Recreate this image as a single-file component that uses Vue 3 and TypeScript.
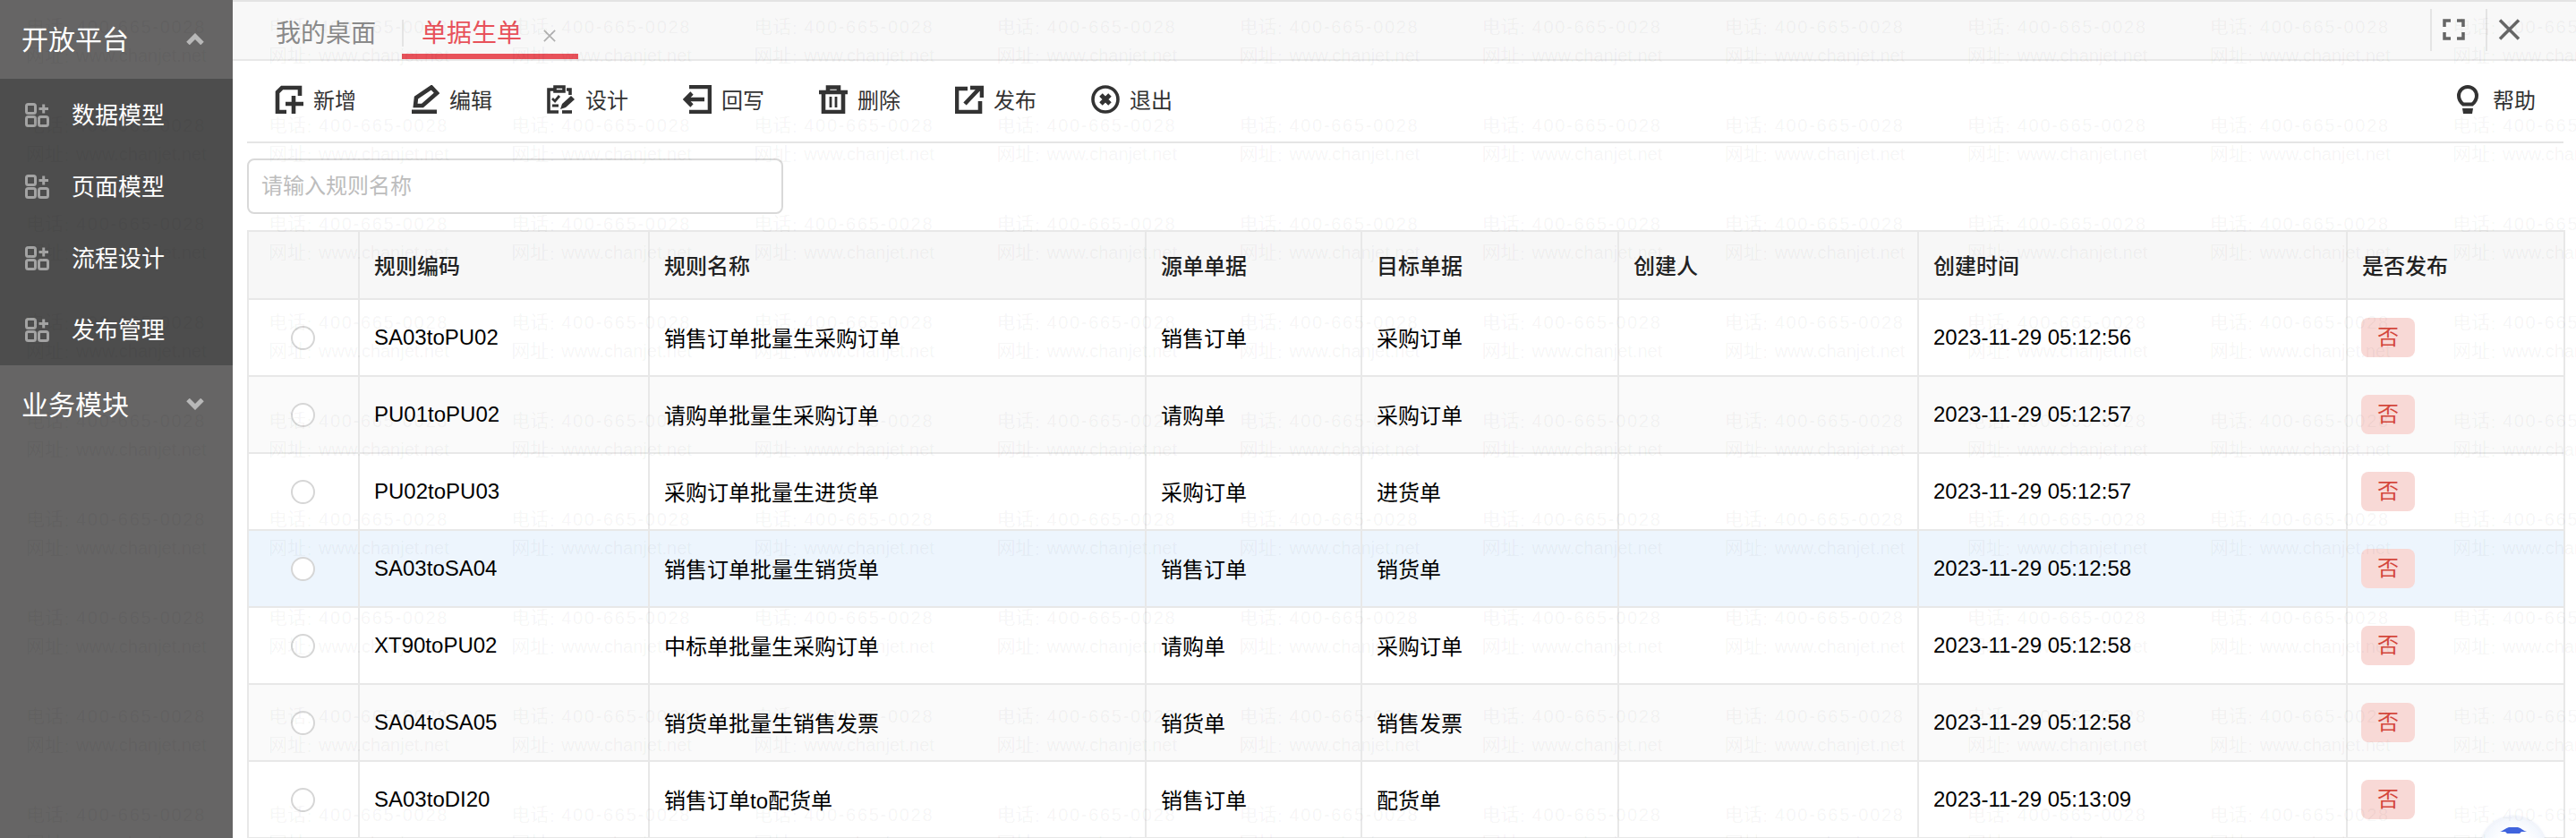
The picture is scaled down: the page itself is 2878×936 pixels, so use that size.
<script setup lang="ts">
interface Row { code: string; name: string; src: string; dst: string; time: string; selected?: boolean }
const rows: Row[] = [
  { code: 'SA03toPU02', name: '销售订单批量生采购订单', src: '销售订单', dst: '采购订单', time: '2023-11-29 05:12:56' },
  { code: 'PU01toPU02', name: '请购单批量生采购订单', src: '请购单', dst: '采购订单', time: '2023-11-29 05:12:57' },
  { code: 'PU02toPU03', name: '采购订单批量生进货单', src: '采购订单', dst: '进货单', time: '2023-11-29 05:12:57' },
  { code: 'SA03toSA04', name: '销售订单批量生销货单', src: '销售订单', dst: '销货单', time: '2023-11-29 05:12:58', selected: true },
  { code: 'XT90toPU02', name: '中标单批量生采购订单', src: '请购单', dst: '采购订单', time: '2023-11-29 05:12:58' },
  { code: 'SA04toSA05', name: '销货单批量生销售发票', src: '销货单', dst: '销售发票', time: '2023-11-29 05:12:58' },
  { code: 'SA03toDI20', name: '销售订单to配货单', src: '销售订单', dst: '配货单', time: '2023-11-29 05:13:09' },
]
const menu = ['数据模型', '页面模型', '流程设计', '发布管理']
const tools = ['新增', '编辑', '设计', '回写', '删除', '发布', '退出']
const heads = ['', '规则编码', '规则名称', '源单单据', '目标单据', '创建人', '创建时间', '是否发布']
const marks = Array.from({ length: 99 }, (_, i) => i)
</script>

<template>
  <div class="page">
    <aside class="side">
      <div class="group">
        <span>开放平台</span>
        <svg class="chev" viewBox="0 0 20 13"><path d="M2 11.5 L10 3.5 L18 11.5" /></svg>
      </div>
      <div class="menu">
        <div v-for="m in menu" :key="m" class="item">
          <svg class="mi" viewBox="0 0 27 27">
            <rect x="1.5" y="1.5" width="10" height="10" rx="2" />
            <rect x="1.5" y="15.5" width="10" height="10" rx="2" />
            <rect x="15.5" y="15.5" width="10" height="10" rx="2" />
            <path d="M15.5 6.5H26M20.7 1.5V11.5" />
          </svg>
          <span>{{ m }}</span>
        </div>
      </div>
      <div class="group">
        <span>业务模块</span>
        <svg class="chev" viewBox="0 0 20 13"><path d="M2 1.5 L10 9.5 L18 1.5" /></svg>
      </div>
    </aside>

    <main class="main">
      <div class="tabs">
        <div class="tab">我的桌面</div>
        <div class="tab active">
          <span>单据生单</span>
          <svg class="tabx" viewBox="0 0 16 16"><path d="M1 1L15 15M15 1L1 15" /></svg>
        </div>
        <div class="winbtns">
          <div class="winbtn">
            <svg viewBox="0 0 25 24"><path d="M9 2H2V9M16 2H23V9M2 15V22H9M23 15V22H16" /></svg>
          </div>
          <div class="winbtn">
            <svg viewBox="0 0 25 24"><path d="M2 1.5L23 22.5M23 1.5L2 22.5" /></svg>
          </div>
        </div>
      </div>

      <div class="toolbar">
        <div v-for="(t, i) in tools" :key="t" class="tool">
          <svg class="ti" viewBox="0 0 32 32">
            <template v-if="i === 0">
              <path d="M28 12V3H8L3 8V30H13" />
              <path d="M12 21H32M21 12V32" />
            </template>
            <template v-else-if="i === 1">
              <path d="M5 23L6 14L23 2.5L29 9L13 23Z" />
              <path d="M1 30H29" class="thick" />
            </template>
            <template v-else-if="i === 2">
              <path d="M9 5H2V30H13M22 5H26V11M9 2H19V7H9Z" class="mid" />
              <path d="M6 15L9 18L14 12M6 23H13" class="thin" />
              <path d="M15 27L17 21L27 12L31 16L21 25Z" class="fill" />
              <path d="M17 30H28" class="mid" />
            </template>
            <template v-else-if="i === 3">
              <path d="M7 2H30V30H7" />
              <path d="M24 16H3M10 9L3 16L10 23" />
            </template>
            <template v-else-if="i === 4">
              <path d="M0 8H32M10 8V2.5H22V8" />
              <path d="M5 8V30H27V8" />
              <path d="M13 13V25M19 13V25" class="thin" />
            </template>
            <template v-else-if="i === 5">
              <path d="M14 4H2V30H28V18" />
              <path d="M11 21L28 3M17 3H30V14" />
            </template>
            <template v-else>
              <circle cx="16" cy="16" r="14" class="mid" />
              <path d="M11 11L21 21M21 11L11 21" class="thick" />
            </template>
          </svg>
          <span>{{ t }}</span>
        </div>
        <div class="tool help">
          <svg class="hi" viewBox="0 0 24 32">
            <path d="M7 21.5C4 19 2 16 2 12A10 10 0 0 1 22 12C22 16 20 19 17 21.5Z" />
            <path d="M6 26H18L17 32H7Z" class="fill" />
          </svg>
          <span>帮助</span>
        </div>
      </div>

      <div class="search">
        <input class="input" placeholder="请输入规则名称" />
      </div>

      <table class="grid">
        <colgroup>
          <col class="c1" /><col class="c2" /><col class="c3" /><col class="c4" />
          <col class="c5" /><col class="c6" /><col class="c7" /><col class="c8" />
        </colgroup>
        <thead>
          <tr><th v-for="h in heads" :key="h">{{ h }}</th></tr>
        </thead>
        <tbody>
          <tr v-for="r in rows" :key="r.code" :class="{ sel: r.selected }">
            <td class="rc"><span class="radio" /></td>
            <td>{{ r.code }}</td>
            <td>{{ r.name }}</td>
            <td>{{ r.src }}</td>
            <td>{{ r.dst }}</td>
            <td></td>
            <td>{{ r.time }}</td>
            <td class="bc"><span class="badge">否</span></td>
          </tr>
        </tbody>
      </table>
    </main>

    <div class="robot">
      <svg viewBox="0 0 30 8" class="robot-svg"><path d="M0 6C4 5 6 2 10 1H20C24 2 26 5 30 6L24 6L22 8H8L6 6Z" /></svg>
    </div>

    <div class="wm">
      <div v-for="n in marks" :key="n" class="wm-tile">
        <div><span class="lab">电话</span><span class="col">：</span><span class="sp">400-665-0028</span></div>
        <div><span class="lab">网址</span><span class="col">：</span><span>www.chanjet.net</span></div>
      </div>
    </div>
  </div>
</template>

<style>
html, body { margin: 0; background: #fff; overflow: hidden; }
</style>

<style scoped>
.page {
  position: relative;
  width: 2878px;
  height: 936px;
  overflow: hidden;
  display: flex;
  font-family: "Liberation Sans", "Noto Sans CJK SC", sans-serif;
  font-size: 24px;
  color: #000;
  background: #fff;
}
.side { width: 260px; flex: none; background: #666565; color: #fff; }
.group {
  height: 88px;
  box-sizing: border-box;
  display: flex;
  align-items: center;
  justify-content: space-between;
  padding: 0 32px 4px 24px;
  font-size: 30px;
}
.chev { width: 20px; height: 13px; fill: none; stroke: #b8b8b8; stroke-width: 5; margin-top: 3px; }
.menu { background: #4d4d4d; }
.item { height: 80px; box-sizing: border-box; display: flex; align-items: center; gap: 25px; padding: 0 0 3px 28px; font-size: 26px; }
.mi { width: 27px; height: 27px; fill: none; stroke: #a3a3a3; stroke-width: 3; flex: none; margin-top: 3px; }

.main { flex: 1; min-width: 0; display: flex; flex-direction: column; padding: 0 14px 0 16px; }
.tabs {
  height: 68px;
  box-sizing: border-box;
  margin: 0 -14px 0 -16px;
  padding-left: 16px;
  border-top: 2px solid #e3e3e3;
  border-bottom: 2px solid #e8e8e8;
  background: #f8f8f8;
  display: flex;
  flex: none;
}
.tab { font-size: 28px; color: #8a8a8a; width: 173px; padding: 19px 0 0 32px; box-sizing: border-box; line-height: 34px; }
.tab.active {
  position: relative;
  width: 197px;
  color: #e8525a;
  padding-left: 22px;
  border-bottom: 6px solid #e8525a;
  height: 64px;
  display: flex;
  align-items: flex-start;
  gap: 24px;
}
.tab.active::before {
  content: "";
  position: absolute;
  left: 0;
  top: 20px;
  width: 2px;
  height: 30px;
  background: #e4e4e4;
}
.tabx { width: 14px; height: 14px; margin-top: 12px; fill: none; stroke: #b0b0b0; stroke-width: 2; }
.winbtns { margin-left: auto; margin-right: 39px; display: flex; height: 47px; margin-top: 8px; }
.winbtn { width: 62px; border-left: 2px solid #e4e4e4; display: flex; align-items: flex-start; padding: 11px 0 0 12px; box-sizing: border-box; }
.winbtn svg { width: 25px; height: 24px; fill: none; stroke: #666; stroke-width: 3.5; }

.toolbar {
  height: 92px;
  box-sizing: border-box;
  flex: none;
  border-bottom: 2px solid #e5e5e5;
  display: flex;
  align-items: center;
  padding: 0 0 4px 31px;
  gap: 61px;
}
.tool { display: flex; align-items: center; gap: 11px; color: #333; }
.tool > span { position: relative; top: -1px; }
.tool.help { margin-left: auto; margin-right: 31px; gap: 16px; }
.ti, .hi { width: 32px; height: 32px; flex: none; fill: none; stroke: #333; stroke-width: 4.6; }
.hi { width: 24px; stroke-width: 4; }
.ti .mid { stroke-width: 3.6; }
.ti .thick { stroke-width: 5; }
.ti .thin { stroke-width: 2.8; }
.fill { fill: #333; stroke: none; }

.search { height: 97px; flex: none; padding-top: 17px; box-sizing: border-box; }
.input {
  display: block;
  width: 599px;
  height: 62px;
  box-sizing: border-box;
  border: 2px solid #d9d9d9;
  border-radius: 8px;
  padding: 0 14px;
  font-family: inherit;
  font-size: 24px;
  outline: none;
  background: #fff;
}
.input::placeholder { color: #bdbdbd; }

.grid {
  width: 2588px;
  table-layout: fixed;
  border-collapse: collapse;
  border: 2px solid #e8e8e8;
  flex: none;
}
.c1 { width: 124px; }
.c2 { width: 324px; }
.c3 { width: 555px; }
.c4 { width: 241px; }
.c5 { width: 287px; }
.c6 { width: 335px; }
.c7 { width: 479px; }
.c8 { width: 243px; }
th, td { border: 2px solid #e8e8e8; padding: 0 0 0 16px; text-align: left; }
th { height: 76px; background: #f7f7f7; font-weight: 500; color: #222; box-sizing: border-box; padding-bottom: 2px; }
td { height: 86px; box-sizing: border-box; padding-bottom: 1px; }
tbody tr:nth-child(even) td { background: #fafafa; }
tbody tr.sel td { background: #edf5fd; }
.rc { padding: 0 0 0 47px; }
td.bc { padding-left: 15px; }
.radio { display: block; width: 27px; height: 27px; box-sizing: border-box; border: 2px solid #d6d6d6; border-radius: 50%; background: #fff; }
.badge {
  display: inline-block;
  width: 60px;
  height: 44px;
  line-height: 44px;
  text-align: center;
  border-radius: 8px;
  background: #f8d9d6;
  color: #d4473c;
  vertical-align: middle;
}

.robot {
  position: absolute;
  left: 2771px;
  top: 912px;
  width: 74px;
  height: 74px;
  box-sizing: border-box;
  padding-top: 9px;
  border: 2px solid #f2f5fb;
  border-radius: 50%;
  background: radial-gradient(circle at 50% 45%, #ffffff 30%, #e6eefb 100%);
  box-shadow: 0 0 3px rgba(150, 170, 220, 0.4);
}
.robot-svg { display: block; width: 30px; height: 8px; margin: 0 auto; fill: #3f63dd; }

.wm {
  position: absolute;
  inset: 0;
  pointer-events: none;
  display: grid;
  grid-template-columns: repeat(11, 271.1px);
  grid-auto-rows: 110px;
  padding: 15px 0 0 29px;
  font-family: "Liberation Sans", "Noto Sans CJK SC", sans-serif;
  font-size: 20px;
  color: rgba(0, 0, 0, 0.05);
  white-space: nowrap;
}
.wm-tile { height: 60px; line-height: 30px; }
.lab { font-size: 21px; }
.col { font-size: 14px; }
.sp { letter-spacing: 1.7px; }
</style>
